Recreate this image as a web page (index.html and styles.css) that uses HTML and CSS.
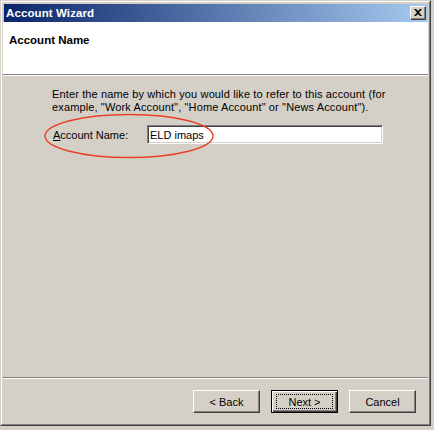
FILE: index.html
```html
<!DOCTYPE html>
<html>
<head>
<meta charset="utf-8">
<link rel="stylesheet" href="styles.css">
</head>
<body>
<div class="window">
  <div class="frame">
    <div class="titlebar">
      <span class="title">Account Wizard</span>
      <span class="close"><svg width="8" height="7" viewBox="0 0 8 7"><path d="M0 0h2l2 2 2-2h2L5 3.5 8 7H6L4 5 2 7H0l3-3.5z" fill="#000"/></svg></span>
    </div>
    <div class="header">Account Name</div>
    <div class="sep"></div>
    <div class="content">
      <p class="intro">Enter the name by which you would like to refer to this account (for example, "Work Account", "Home Account" or "News Account").</p>
      <div class="row">
        <label class="label"><u>A</u>ccount Name:</label>
        <div class="input">ELD imaps</div>
        <svg class="ellipse" width="172" height="46" viewBox="0 0 172 46"><ellipse cx="86" cy="23" rx="84" ry="21.5" fill="none" stroke="#e8402a" stroke-width="1.4"/></svg>
      </div>
    </div>
    <div class="sep"></div>
    <div class="footer">
      <button class="btn">&lt; Back</button>
      <button class="btn default"><span class="focus">Next &gt;</span></button>
      <button class="btn cancel">Cancel</button>
    </div>
  </div>
</div>
</body>
</html>
```
FILE: styles.css
```css
html, body {
  margin: 0;
  padding: 0;
  background: #d4d0c8;
}
body {
  font-family: "Liberation Sans", Arial, sans-serif;
  font-size: 11px;
  color: #000;
}
.window {
  width: 431px;
  height: 426px;
  box-sizing: border-box;
  border: 1px solid;
  border-color: #d4d0c8 #404040 #404040 #d4d0c8;
}
.frame {
  height: 100%;
  box-sizing: border-box;
  border: 1px solid;
  border-color: #fff #808080 #808080 #fff;
  padding: 2px 1px 1px 1px;
  display: flex;
  flex-direction: column;
}
.titlebar {
  height: 18px;
  margin-left: 1px;
  background: linear-gradient(to right, #0a246a, #a6caf0);
  display: flex;
  align-items: center;
  justify-content: space-between;
  padding: 0 2px 0 2px;
}
.title {
  color: #fff;
  font-weight: bold;
  font-size: 11.5px;
  letter-spacing: 0.1px;
}
.close {
  width: 16px;
  height: 14px;
  box-sizing: border-box;
  background: #d4d0c8;
  border: 1px solid;
  border-color: #fff #404040 #404040 #fff;
  box-shadow: inset -1px -1px 0 #808080;
  display: flex;
  align-items: center;
  justify-content: center;
  padding: 0 1px 1px 0;
}
.close svg { display: block; }
.header {
  background: #fff;
  height: 52px;
  box-sizing: border-box;
  padding: 12px 0 0 6px;
  font-weight: bold;
  font-size: 11.5px;
  line-height: 13px;
}
.sep {
  height: 0;
  border-top: 1px solid #808080;
  border-bottom: 1px solid #fff;
}
.content {
  flex: 1;
  padding: 12px 30px 0 49px;
}
.intro {
  margin: 0;
  line-height: 13px;
  letter-spacing: 0.13px;
}
.row {
  position: relative;
  display: flex;
  align-items: center;
  margin-top: 11px;
  height: 19px;
}
.label {
  width: 94px;
  padding-left: 1px;
}
.input {
  width: 236px;
  height: 19px;
  box-sizing: border-box;
  background: #fff;
  border: 1px solid;
  border-color: #808080 #fff #fff #808080;
  box-shadow: inset 1px 1px 0 #404040, inset -1px -1px 0 #d4d0c8;
  padding: 2px 2px;
  line-height: 14px;
}
.ellipse {
  position: absolute;
  left: -9px;
  top: -12px;
}
.footer {
  display: flex;
  justify-content: flex-end;
  gap: 11px;
  padding: 11px 12px 0 0;
  height: 44px;
  box-sizing: border-box;
}
.btn {
  width: 67px;
  height: 23px;
  box-sizing: border-box;
  font-family: inherit;
  font-size: 11px;
  color: #000;
  background: #d4d0c8;
  border: 1px solid;
  border-color: #fff #404040 #404040 #fff;
  box-shadow: inset -1px -1px 0 #808080;
  padding: 0;
  margin: 0;
  display: flex;
  align-items: center;
  justify-content: center;
}
.btn.default {
  border: 1px solid #000;
  box-shadow: inset 1px 1px 0 #fff, inset -1px -1px 0 #404040, inset -2px -2px 0 #808080;
}
.focus {
  display: flex;
  align-items: center;
  justify-content: center;
  width: 57px;
  height: 15px;
  box-sizing: border-box;
  border: 1px dotted #000;
}
```
